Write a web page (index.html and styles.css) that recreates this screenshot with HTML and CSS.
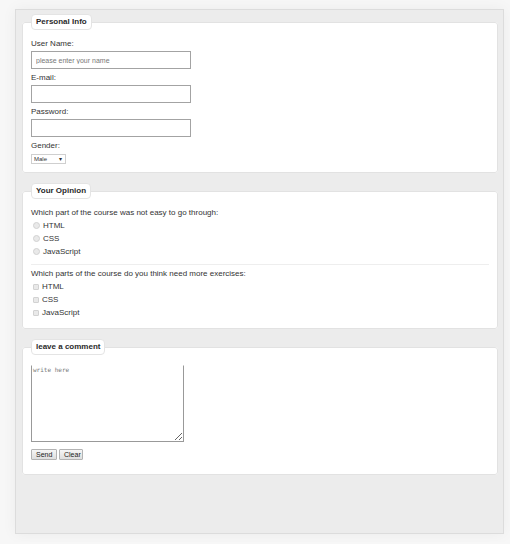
FILE: index.html
```html
<!DOCTYPE html>
<html lang="en">
<head>
<meta charset="UTF-8">
<meta name="viewport" content="width=device-width, initial-scale=1.0">
<title>Course feedback</title>
<link rel="stylesheet" href="styles.css">
</head>
<body>
    <div class="wrapper">
        <form class="survey">
            <!-- personal info -->
            <fieldset class="box personal">
                <legend>Personal Info</legend>
                <label for="userName">User Name:</label>
                <input type="text" id="userName" class="field" placeholder="please enter your name">
                <label for="email">E-mail:</label>
                <input type="text" id="email" class="field">
                <label for="password">Password:</label>
                <input type="password" id="password" class="field">
                <label for="gender">Gender:</label>
                <span class="select-wrap">
                    <select id="gender" class="gender">
                        <option>Male</option>
                        <option>Female</option>
                    </select>
                </span>
            </fieldset>

            <!-- opinion -->
            <fieldset class="box">
                <legend>Your Opinion</legend>
                <p class="question">Which part of the course was not easy to go through:</p>
                <div class="choice"><input type="radio" name="hard" id="h1"><label for="h1">HTML</label></div>
                <div class="choice"><input type="radio" name="hard" id="h2"><label for="h2">CSS</label></div>
                <div class="choice"><input type="radio" name="hard" id="h3"><label for="h3">JavaScript</label></div>
                <hr>
                <p class="question">Which parts of the course do you think need more exercises:</p>
                <div class="choice"><input type="checkbox" id="e1"><label for="e1">HTML</label></div>
                <div class="choice"><input type="checkbox" id="e2"><label for="e2">CSS</label></div>
                <div class="choice"><input type="checkbox" id="e3"><label for="e3">JavaScript</label></div>
            </fieldset>

            <!-- comment -->
            <fieldset class="box comment">
                <legend>leave a comment</legend>
                <textarea class="message" placeholder="write here"></textarea>
                <div class="actions">
                    <button type="button">Send</button>
                    <button type="reset">Clear</button>
                </div>
            </fieldset>
        </form>
    </div>
</body>
</html>
```

FILE: styles.css
```css
body {
    margin: 0;
    padding: 9px 6px 8px 15px;
    background-color: #f7f7f7;
    font-family: "Liberation Sans", Arial, sans-serif;
    font-size: 8px;
    color: #333;
}
.wrapper {
    height: 525px;
    background-color: #ececec;
    border: 1px solid #dcdcdc;
    box-shadow: 0 0 14px rgba(0,0,0,0.05);
    padding: 4px 5px 0 6px;
    box-sizing: border-box;
}
.box {
    margin: 0 0 10px 0;
    padding: 8px 8px 9px 8px;
    border: 1px solid #e2e2e2;
    border-radius: 3px;
    background-color: #fff;
}
.box.personal {
    padding-bottom: 8px;
}
.box legend {
    padding: 2px 4px;
    line-height: 10px;
    border: 1px solid #e4e4e4;
    border-radius: 4px;
    background-color: #fff;
    font-weight: bold;
    color: #2a2a2a;
}
.box > label {
    display: block;
    line-height: 12px;
    margin-bottom: 1px;
}
.field {
    display: block;
    width: 160px;
    height: 18px;
    box-sizing: border-box;
    margin: 0 0 3px 0;
    padding: 0 4px;
    border: 1px solid #a3a3a3;
    font-family: "Liberation Sans", Arial, sans-serif;
    font-size: 7px;
}
.field::placeholder {
    color: #777;
}
.select-wrap {
    display: inline-block;
    position: relative;
    margin-top: 1px;
}
.gender {
    appearance: none;
    -webkit-appearance: none;
    display: block;
    width: 35px;
    height: 10px;
    margin: 0;
    padding: 0 0 0 2px;
    border: 1px solid #cfcfcf;
    border-radius: 0;
    background: #fff;
    font-family: "Liberation Sans", Arial, sans-serif;
    font-size: 6px;
    line-height: 8px;
    color: #333;
}
.select-wrap::after {
    content: "\25BE";
    position: absolute;
    right: 4px;
    top: 0;
    font-size: 6px;
    line-height: 10px;
    pointer-events: none;
}
.question {
    margin: 0;
    line-height: 12px;
}
.choice {
    display: flex;
    align-items: center;
    height: 13px;
}
.choice input {
    appearance: none;
    -webkit-appearance: none;
    width: 6px;
    height: 6px;
    margin: 0 3px 0 2px;
    border: 1px solid #d2d2d2;
    background-color: #e9e9e9;
    border-radius: 1px;
    box-sizing: border-box;
}
.choice input[type="radio"] {
    border-radius: 50%;
    width: 7px;
    height: 7px;
}
hr {
    margin: 6px 0 3px 0;
    border: none;
    border-top: 1px solid #eee;
}
.comment {
    padding-bottom: 14px;
}
.message {
    display: block;
    width: 153px;
    height: 77px;
    box-sizing: border-box;
    margin: 2px 0 0 0;
    padding: 0 1px;
    border: 1px solid #999;
    border-top-color: transparent;
    font-family: "DejaVu Sans Mono", "Liberation Mono", monospace;
    font-size: 6px;
}
.message::placeholder {
    color: #777;
}
.actions {
    display: flex;
    gap: 2px;
    margin-top: 7px;
}
.actions button {
    height: 11px;
    padding: 0 4px;
    border: 1px solid #b3b3b3;
    border-radius: 1px;
    background: linear-gradient(#f6f6f6, #dedede);
    font-family: "Liberation Sans", Arial, sans-serif;
    font-size: 7px;
    line-height: 9px;
    color: #222;
    cursor: pointer;
}
.actions button:first-child {
    width: 26px;
}
.actions button:last-child {
    width: 24px;
}
```
